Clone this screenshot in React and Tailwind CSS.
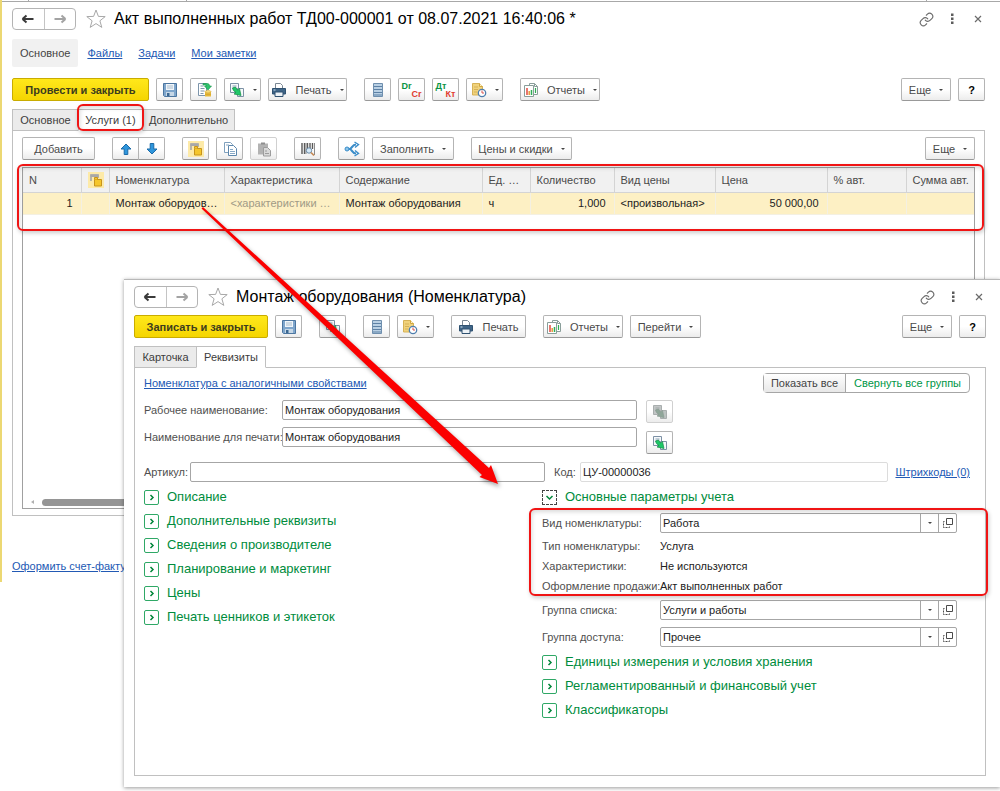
import clsx from 'clsx';
import { Link as ChainIcon } from 'lucide-react';

/* ---------- icons ---------- */

const Svg = ({ children, size = 'size-4', box = '0 0 16 16', className = '' }) => (
  <svg viewBox={box} className={clsx('shrink-0', size, className)} fill="none" aria-hidden="true">{children}</svg>
);

const ArrowIcon = ({ flip, muted }) => (
  <Svg className={flip ? 'rotate-180' : ''}>
    <path d="M2.5 8H13.5M2.5 8L6.5 4.5M2.5 8L6.5 11.5" stroke={muted ? '#a3a3a3' : '#3a3a3a'} strokeWidth="2" />
  </Svg>
);

const StarIcon = () => (
  <Svg size="size-5" box="0 0 20 20">
    <path d="M10 1L12.4 7.4L19.2 7.6L13.9 11.8L15.8 18.4L10 14.6L4.2 18.4L6.1 11.8L.8 7.6L7.6 7.4Z" stroke="#a8a8a8" />
  </Svg>
);

const DotsIcon = () => (
  <Svg>
    <path d="M7 2.5h2.500v2.500H7zM7 6.500h2.500v2.500H7zM7 10.500h2.500v2.500H7z" fill="#5c5c5c" />
  </Svg>
);

const CloseIcon = () => (
  <Svg>
    <path d="M5 5L11 11M11 5L5 11" stroke="#6b6b6b" strokeWidth="1.2" />
  </Svg>
);

const SaveIcon = () => (
  <Svg>
    <path d="M1.5 1.5h13v13h-12l-1-1z" fill="#7fa6cc" stroke="#4c76a0" />
    <path d="M4 2h8v6h-8z" fill="#f1f6fa" />
    <path d="M5 4h6M5 6h6" stroke="#a9bccd" />
    <path d="M4 10h8v4H4z" fill="#c6d7e6" />
    <path d="M5 11h2.500v3H5z" fill="#3b6791" />
  </Svg>
);

const PostIcon = () => (
  <Svg>
    <path d="M2.500 1.500h8v12h-8z" fill="#fff" stroke="#7d95ab" />
    <path d="M4.500 4h3M4.500 6.500h4M4.500 9h4M4.500 11.500h3" stroke="#7d95ab" />
    <path d="M7 1.500h4c2 0 2.500 1 2.500 2.500H15.500L12 8L8.500 4H10.500C10.500 3 9 3 7 3Z" fill="#2cc36b" stroke="#17934a" strokeWidth=".6" />
    <path d="M9 9.500h6v5H9z" fill="#e8bb3a" />
    <ellipse cx="12" cy="9.700" rx="3" ry="1.200" fill="#f7dd7c" stroke="#c9992a" strokeWidth=".5" />
    <path d="M9 12c1.500 1 4.500 1 6 0" stroke="#c9992a" strokeWidth=".6" />
  </Svg>
);

const CopyFromIcon = ({ muted }) => (
  <Svg>
    <path d="M1.500 1.500h8v9h-8z" fill={muted ? '#c2c6c6' : '#f6f9fb'} stroke={muted ? '#a9aeae' : '#7d91a5'} />
    <path d="M3.500 4h4M3.500 6h3" stroke={muted ? '#a0a6a6' : '#8da1b4'} />
    <path d="M8.500 6.500h6v8h-6z" fill={muted ? '#bcc3c1' : '#f6f9fb'} stroke={muted ? '#a9aeae' : '#7d91a5'} />
    <path d="M3.500 6L6.500 5L8.500 8L10.500 6.500L12 13.500L5 12L7 10.500C5 9.500 4 8 3.500 6Z" fill={muted ? '#8fa699' : '#1fc768'} stroke={muted ? '#8a9c92' : '#128d45'} strokeWidth=".7" />
  </Svg>
);

const PrinterIcon = () => (
  <Svg>
    <path d="M4.500 6V1.500h5l2 2V6" fill="#fff" stroke="#7b8894" />
    <path d="M1.500 6.500h13v5.500h-13z" fill="#3f6587" stroke="#2f5170" strokeLinejoin="round" />
    <path d="M4 10h8v4.500H4z" fill="#edf2f6" stroke="#2f5170" />
    <path d="M2.500 8h2" stroke="#cfe0ee" />
  </Svg>
);

const ListIcon = () => (
  <Svg>
    <path d="M3.500 1.500h9v13h-9z" fill="#b9d0e4" stroke="#6f8fae" />
    <path d="M4 4.500h8M4 7.500h8M4 10.500h8M4 13h8" stroke="#5d81a5" />
  </Svg>
);

const NoteClockIcon = () => (
  <Svg>
    <path d="M1.500 1.500h7l3 3v8.500h-10z" fill="#f0d27c" stroke="#d6b257" />
    <path d="M8.500 1.500v3h3" fill="#fff3c9" stroke="#d1a63f" />
    <path d="M3 5h4M3 7.500h4M3 10h3" stroke="#d6b257" />
    <circle cx="11" cy="11" r="3.700" fill="#fff" stroke="#4f7fae" strokeWidth="1.300" />
    <path d="M11 11V8.500M11 11H13" stroke="#d9534f" />
  </Svg>
);

const ReportIcon = () => (
  <Svg>
    <path d="M6.500 1.500h5l3 3v8h-8z" fill="#fff" stroke="#8a9e9a" />
    <path d="M11.500 1.500v3h3" stroke="#8a9e9a" />
    <path d="M1.500 3.500h9v11h-9z" fill="#fff" stroke="#8a9e9a" />
    <path d="M4 6v7" stroke="#e0483e" strokeWidth="1.500" />
    <path d="M6.200 9v4" stroke="#e59a3c" strokeWidth="1.500" />
    <path d="M8.500 8v5" stroke="#2fae54" strokeWidth="1.500" />
    <path d="M12.500 6v5" stroke="#2fae54" strokeWidth="1.200" />
  </Svg>
);

const UpDownIcon = ({ down }) => (
  <Svg className={down ? 'rotate-180' : ''}>
    <path d="M8 3L13 8H9.800V13.500H6.200V8H3Z" fill="#2f96dc" stroke="#1b6aa8" strokeLinejoin="round" />
  </Svg>
);

const PackIcon = () => (
  <Svg>
    <path d="M0 0h16v16H0z" fill="#fdeaa8" />
    <path d="M3 9V3h7v3" stroke="#a6a6a6" strokeWidth="1.600" />
    <path d="M2.500 2.500h8v2.500h-8z" fill="#a8a8a8" />
    <path d="M6.500 7.500h7v6.500h-7z" fill="#f5c62c" stroke="#c8951b" />
    <path d="M6.500 7.500V5.500h3v2" fill="#f5c62c" stroke="#c8951b" />
  </Svg>
);

const CopyIcon = () => (
  <Svg>
    <path d="M2.500 1.500h6l2 2v8h-8z" fill="#fff" stroke="#7fa0bd" />
    <path d="M6.500 4.500h5l3 3v7h-8z" fill="#fff" stroke="#5c86ab" />
    <path d="M8 8.500h3M8 10.500h5M8 12.500h5M4 4h3" stroke="#88a9c6" />
  </Svg>
);

const PasteIcon = () => (
  <Svg>
    <path d="M2 2.500h10v11H2z" fill="#b3b3b3" />
    <path d="M5 1.500h4v2H5z" fill="#8f8f8f" />
    <path d="M7.500 6.500h4l3 3v5.500h-7z" fill="#d9d9d9" stroke="#9c9c9c" />
    <path d="M9 10h2M9 12.500h4" stroke="#9c9c9c" />
  </Svg>
);

const BarcodeIcon = () => (
  <Svg>
    <path d="M2 2v11M4.500 2v11M7.500 2v7M10 2v5M12.500 2v6" stroke="#5a5a5a" strokeWidth="1.400" />
    <path d="M14.500 2v12M6 2v11" stroke="#5a5a5a" strokeWidth=".7" />
    <circle cx="9" cy="9.500" r="2.700" fill="#d7eaf8" stroke="#6b8aa5" />
    <path d="M11 11.500L14 14.500" stroke="#c58a55" strokeWidth="1.700" />
  </Svg>
);

const ShareIcon = () => (
  <Svg>
    <path d="M3 8H5.500C8 8 8 3.500 12 3.500M5.500 8C8 8 8 12.500 12 12.500" stroke="#3b8dc9" strokeWidth="2.200" />
    <path d="M10.500 1L14.500 3.500L11 6.500M10.500 15L14.500 12.500L11 9.500" stroke="#3b8dc9" strokeWidth="1.400" />
    <circle cx="3" cy="8" r="2" fill="#8cc5ea" stroke="#3b8dc9" />
  </Svg>
);

const OpenIcon = () => (
  <Svg size="size-3" box="0 0 12 12">
    <path d="M4.500 1.500h6v6h-6z" stroke="#4a4a4a" />
    <path d="M2.500 4.500h-1v6h6v-1.500" stroke="#4a4a4a" strokeDasharray="2 1" />
  </Svg>
);

const Caret = () => <span className="border-x-2 border-t-2 border-x-transparent border-t-[#444]" />;

/* two-letter accounting marks, one above the other */
const PairMark = ({ first, second }) => (
  <span className="block w-5 text-[9px] leading-2 font-bold">
    <span className="block text-left text-[#0b9444]">{first}</span>
    <span className="block text-right text-[#e03c31]">{second}</span>
  </span>
);

/* ---------- controls ---------- */

const Button = ({ children, className, label, caret, muted }) => (
  <button
    type="button"
    aria-label={label}
    className={clsx(
      'flex h-[23px] shrink-0 items-center justify-center gap-2 rounded-xs border bg-linear-to-b from-white from-50% to-[#ececec] text-[#4a4a4a]',
      muted ? 'border-[#d0d0d0]' : 'border-[#b4b4b4] border-b-[#999]',
      className,
    )}
  >
    {children}
    {caret && <Caret />}
  </button>
);

const MainButton = ({ children, className }) => (
  <button type="button" className={clsx('h-[23px] shrink-0 rounded-xs border border-[#c9ac00] bg-linear-to-b from-[#ffe81a] to-[#f5d500] font-bold text-[#3c3c1e]', className)}>
    {children}
  </button>
);

const Divider = () => <span className="w-[3px] shrink-0" />;

const WindowTitle = ({ children }) => (
  <header className="flex h-[22px] items-center">
    <div className="flex h-[22px] w-16 shrink-0 divide-x divide-[#c4c4c4] rounded-sm border border-[#b4b4b4]">
      <button type="button" aria-label="Назад" className="flex flex-1 items-center justify-center"><ArrowIcon /></button>
      <button type="button" aria-label="Вперед" className="flex flex-1 items-center justify-center"><ArrowIcon flip muted /></button>
    </div>
    <button type="button" aria-label="В избранное" className="ml-[10px]"><StarIcon /></button>
    <h1 className="ml-2 flex-1 truncate text-base leading-5 text-black">{children}</h1>
    <div className="-mr-px flex items-center gap-[10px]">
      <button type="button" aria-label="Ссылка"><ChainIcon size={15} strokeWidth={1.8} color="#6b6b6b" /></button>
      <button type="button" aria-label="Меню"><DotsIcon /></button>
      <button type="button" aria-label="Закрыть"><CloseIcon /></button>
    </div>
  </header>
);

const Tab = ({ children, active, className }) => (
  <button
    type="button"
    role="tab"
    aria-selected={!!active}
    className={clsx('relative h-[22px] border border-[#c0c0c0] text-[#3c3c3c]', active ? 'z-10 border-b-white bg-white' : 'bg-[#ebebeb]', className)}
  >
    {children}
  </button>
);

/* red frame round the part being explained */
const Mark = ({ className }) => (
  <span className={clsx('pointer-events-none absolute z-20 rounded-md border-2 border-[#f01414] shadow-[1px_2px_4px_rgba(0,0,0,0.2),inset_1px_2px_4px_rgba(0,0,0,0.15)]', className)} />
);

const Link = ({ children, className }) => <a href="#" className={clsx('text-[#2259b4] underline', className)}>{children}</a>;

const Group = ({ children, open }) => (
  <button type="button" aria-expanded={!!open} className="flex h-6 items-center gap-2 text-[13px] whitespace-nowrap text-[#008c3c]">
    <span className={clsx('flex size-[15px] items-center justify-center border', open ? 'border-dashed border-[#444]' : 'rounded-xs border-[#2fa866]')}>
      <Svg size="size-[11px]" box="0 0 11 11">
        <path d={open ? 'M2.500 4L5.500 7L8.500 4' : 'M4.500 3L7 5.500L4.500 8'} stroke="#00863a" strokeWidth="1.500" />
      </Svg>
    </span>
    {children}
  </button>
);

const inputClass = 'h-5 min-w-0 rounded-xs border px-[2px] text-[#222] outline-none';
const labelClass = 'shrink-0 whitespace-nowrap text-[#4f4f4f]';

const Choice = ({ id, label, value }) => (
  <div className="flex h-[27px] items-center">
    <label htmlFor={id} className={clsx(labelClass, 'w-[118px]')}>{label}</label>
    <div className="flex h-5 w-[297px] rounded-xs border border-[#a6a6a6]">
      <div className="relative flex-1">
        <select id={id} className="h-full w-full appearance-none pl-[2px] text-[#222] outline-none">
          <option>{value}</option>
        </select>
        <span className="pointer-events-none absolute inset-y-0 right-0 flex w-[18px] items-center justify-center border-l border-[#a6a6a6]"><Caret /></span>
      </div>
      <button type="button" aria-label="Открыть" className="flex w-[18px] items-center justify-center border-l border-[#a6a6a6]"><OpenIcon /></button>
    </div>
  </div>
);

const Fact = ({ label, value }) => (
  <div className="flex h-5 items-center">
    <dt className={clsx(labelClass, 'w-[118px]')}>{label}</dt>
    <dd className="text-[#222]">{value}</dd>
  </div>
);

/* ---------- services table ---------- */

const columns = [
  { title: 'N', value: '1', width: 'w-[58px]', right: true },
  { title: <PackIcon />, value: '', width: 'w-[28px]' },
  { title: 'Номенклатура', value: 'Монтаж оборудов…', width: 'w-[115px]' },
  { title: 'Характеристика', value: '<характеристики …', width: 'w-[115px]', dim: true },
  { title: 'Содержание', value: 'Монтаж оборудования', width: 'w-[143px]' },
  { title: 'Ед. …', value: 'ч', width: 'w-[48px]' },
  { title: 'Количество', value: '1,000', width: 'w-[84px]', right: true },
  { title: 'Вид цены', value: '<произвольная>', width: 'w-[101px]' },
  { title: 'Цена', value: '50 000,00', width: 'w-[112px]', right: true },
  { title: '% авт.', value: '', width: 'w-[79px]' },
  { title: 'Сумма авт.', value: '', width: 'w-auto' },
];

const ServicesTable = () => (
  <div className="relative mt-[7px] flex h-[342px] flex-col border border-[#a0a0a0]">
    <table className="w-full table-fixed border-collapse text-left">
      <thead>
        <tr className="h-6 bg-[#f1f1f1] text-[#4a4a4a]">
          {columns.map((c, i) => (
            <th key={i} className={clsx('border-r border-b border-[#d4d4d4] py-0 pl-[6px] font-normal whitespace-nowrap last:border-r-0', c.width)}>{c.title}</th>
          ))}
        </tr>
      </thead>
      <tbody>
        <tr className="h-[22px] bg-[#fdf0c4]">
          {columns.map((c, i) => (
            <td key={i} className={clsx('border-r border-b border-[#f4f0e2] py-0 pl-[6px] whitespace-nowrap last:border-r-0', c.right && 'pr-2 text-right', c.dim ? 'text-[#a09a86]' : 'text-[#222]')}>{c.value}</td>
          ))}
        </tr>
      </tbody>
    </table>
    <div className="mt-auto flex h-3 items-center gap-2 pl-2">
      <span className="border-y-2 border-r-3 border-y-transparent border-r-[#b0b0b0]" />
      <span className="h-[7px] w-3/4 rounded-full bg-[#959595]" />
    </div>
    <Mark className="-top-[4px] -right-[10px] -left-[6px] h-[67px]" />
  </div>
);

/* ---------- windows ---------- */

const ActWindow = () => (
  <main className="h-[582px] border-l-2 border-[#ecd873] pr-[15px] pl-[10px]">
    <div className="-mr-[15px] -ml-[10px] flex h-px divide-x divide-[#a8a8a8]">
      <span className="w-[27px]" />
      <span className="w-[158px]" />
      <span className="flex-1" />
      <span className="w-[73px]" />
    </div>
    <div className="-mr-[15px] -ml-[10px] h-[7px] border-t border-[#a8a8a8]" />
    <WindowTitle>Акт выполненных работ ТД00-000001 от 08.07.2021 16:40:06 *</WindowTitle>
    <nav className="mt-[9px] flex h-7 items-center">
      <span className="flex h-7 items-center rounded-xs bg-[#f1f1f1] px-2 text-[#444]">Основное</span>
      <Link className="ml-[9px]">Файлы</Link>
      <Link className="ml-4">Задачи</Link>
      <Link className="ml-4">Мои заметки</Link>
    </nav>
    <div className="mt-[11px] flex gap-[7px]">
      <MainButton className="w-[137px]">Провести и закрыть</MainButton>
      <Button className="w-[27px]" label="Записать"><SaveIcon /></Button>
      <Button className="w-[27px]" label="Провести"><PostIcon /></Button>
      <Button className="w-[37px]" label="Создать на основании" caret><CopyFromIcon /></Button>
      <Button className="w-[79px]" caret><PrinterIcon />Печать</Button>
      <Divider />
      <Button className="w-[27px]" label="Список"><ListIcon /></Button>
      <Button className="w-[27px]" label="Проводки МСФО"><PairMark first="Dr" second="Cr" /></Button>
      <Button className="w-[27px]" label="Проводки"><PairMark first="Дт" second="Кт" /></Button>
      <Button className="w-[37px]" label="Напоминания" caret><NoteClockIcon /></Button>
      <Divider />
      <Button className="w-20" caret><ReportIcon />Отчеты</Button>
      <Button className="ml-auto w-[50px]" caret>Еще</Button>
      <Button className="w-[27px] font-bold text-black">?</Button>
    </div>

    <div role="tablist" className="mt-2 flex">
      <Tab className="w-[67px]">Основное</Tab>
      <div className="relative -ml-px flex">
        <Tab active className="w-[65px]">Услуги (1)</Tab>
        <Mark className="-top-[5px] -right-px -left-px h-[27px]" />
      </div>
      <Tab className="-ml-px w-[93px]">Дополнительно</Tab>
    </div>
    <section className="-mt-px h-[386px] border border-[#c0c0c0] px-[9px] pt-[6px]">
      <div className="flex gap-[7px]">
        <Button className="w-[73px]">Добавить</Button>
        <Divider />
        <div className="flex">
          <Button className="w-[27px] rounded-r-none" label="Выше"><UpDownIcon /></Button>
          <Button className="-ml-px w-[27px] rounded-l-none" label="Ниже"><UpDownIcon down /></Button>
        </div>
        <Divider />
        <Button className="w-[27px]" label="Набор"><PackIcon /></Button>
        <Button className="w-[27px]" label="Копировать"><CopyIcon /></Button>
        <Button className="w-[27px]" label="Вставить" muted><PasteIcon /></Button>
        <Divider />
        <Button className="w-[27px]" label="Штрихкод"><BarcodeIcon /></Button>
        <Divider />
        <Button className="w-[27px]" label="Разбить строку"><ShareIcon /></Button>
        <Button className="w-[82px]" caret>Заполнить</Button>
        <Divider />
        <Button className="w-[101px]" caret>Цены и скидки</Button>
        <Button className="ml-auto w-[50px]" caret>Еще</Button>
      </div>
      <ServicesTable />
    </section>
    <Link className="mt-[42px] inline-block">Оформить счет-фактуру</Link>
  </main>
);

const sections = ['Описание', 'Дополнительные реквизиты', 'Сведения о производителе', 'Планирование и маркетинг', 'Цены', 'Печать ценников и этикеток'];

const ItemWindow = () => (
  <div role="dialog" aria-label="Номенклатура" className="absolute top-[279px] right-0 left-[124px] z-30 border-t border-[#b8b8b8] bg-white pt-[6px] pr-[14px] pb-[11px] pl-[10px] shadow-[0_1px_4px_rgba(0,0,0,0.4)]">
    <WindowTitle>Монтаж оборудования (Номенклатура)</WindowTitle>
    <div className="mt-[7px] flex gap-[7px]">
      <MainButton className="w-[134px]">Записать и закрыть</MainButton>
      <Button className="w-[27px]" label="Записать"><SaveIcon /></Button>
      <Divider />
      <Button className="w-[27px]" label="Создать на основании"><CopyFromIcon /></Button>
      <Divider />
      <Button className="w-[27px]" label="Список"><ListIcon /></Button>
      <Button className="w-[37px]" label="Напоминания" caret><NoteClockIcon /></Button>
      <Divider />
      <Button className="w-[75px]"><PrinterIcon />Печать</Button>
      <Divider />
      <Button className="w-20" caret><ReportIcon />Отчеты</Button>
      <Button className="w-[71px]" caret>Перейти</Button>
      <Button className="ml-auto w-[50px]" caret>Еще</Button>
      <Button className="w-[27px] font-bold text-black">?</Button>
    </div>

    <div role="tablist" className="mt-2 flex">
      <Tab className="w-[63px]">Карточка</Tab>
      <Tab active className="-ml-px w-[70px]">Реквизиты</Tab>
    </div>
    <section className="-mt-px h-[409px] border border-[#c0c0c0] pt-[5px] pr-[15px] pl-[9px]">
      <div className="flex h-5 items-center justify-between">
        <Link>Номенклатура с аналогичными свойствами</Link>
        <div className="flex h-5 rounded-sm border border-[#a6a6a6]">
          <button type="button" className="w-[82px] border-r border-[#a6a6a6] bg-linear-to-b from-white to-[#e8e8e8] text-[#444]">Показать все</button>
          <button type="button" className="w-[123px] text-[#009646]">Свернуть все группы</button>
        </div>
      </div>
      <div className="mt-[7px] flex gap-[9px]">
        <div className="flex flex-col gap-[7px]">
          <div className="flex h-5 items-center">
            <label htmlFor="work-name" className={clsx(labelClass, 'w-[138px]')}>Рабочее наименование:</label>
            <input id="work-name" defaultValue="Монтаж оборудования" className={clsx(inputClass, 'w-[355px] border-[#a6a6a6]')} />
          </div>
          <div className="flex h-5 items-center">
            <label htmlFor="print-name" className={clsx(labelClass, 'w-[138px]')}>Наименование для печати:</label>
            <input id="print-name" defaultValue="Монтаж оборудования" className={clsx(inputClass, 'w-[355px] border-[#a6a6a6]')} />
          </div>
        </div>
        <div className="flex flex-col gap-2">
          <Button className="w-[27px]" label="Заполнить рабочее наименование" muted><CopyFromIcon muted /></Button>
          <Button className="w-[27px]" label="Заполнить наименование для печати"><CopyFromIcon /></Button>
        </div>
      </div>
      <div className="mt-2 flex h-5 items-center">
        <label htmlFor="sku" className={clsx(labelClass, 'w-[46px]')}>Артикул:</label>
        <input id="sku" className={clsx(inputClass, 'w-[355px] border-[#a6a6a6]')} />
        <label htmlFor="code" className={clsx(labelClass, 'ml-[9px] w-[26px]')}>Код:</label>
        <input id="code" readOnly defaultValue="ЦУ-00000036" className={clsx(inputClass, 'flex-1 border-[#dcdcdc]')} />
        <Link className="ml-[7px]">Штрихкоды (0)</Link>
      </div>
      <div className="mt-[3px] grid grid-cols-[398px_1fr]">
        <div>{sections.map((s) => <Group key={s}>{s}</Group>)}</div>
        <div>
          <Group open>Основные параметры учета</Group>
          <div className="relative">
            <Choice id="kind" label="Вид номенклатуры:" value="Работа" />
            <dl>
              <Fact label="Тип номенклатуры:" value="Услуга" />
              <Fact label="Характеристики:" value="Не используются" />
              <Fact label="Оформление продажи:" value="Акт выполненных работ" />
            </dl>
            <Mark className="-top-px -right-[18px] bottom-0 -left-[13px]" />
          </div>
          <Choice id="list-group" label="Группа списка:" value="Услуги и работы" />
          <Choice id="access-group" label="Группа доступа:" value="Прочее" />
          <Group>Единицы измерения и условия хранения</Group>
          <Group>Регламентированный и финансовый учет</Group>
          <Group>Классификаторы</Group>
        </div>
      </div>
    </section>
  </div>
);

/* pointer from the table row to the item card */
const Pointer = () => (
  <svg viewBox="0 0 320 300" className="pointer-events-none absolute top-[200px] left-[190px] z-40 h-[300px] w-[320px] drop-shadow-[2px_3px_2px_rgba(0,0,0,0.35)]" aria-hidden="true">
    <path d="M11.500 8.500L13 7L299 268L301 265L308 284L289.500 277L292 275Z" fill="#fb0000" />
  </svg>
);

export default function App() {
  return (
    <div className="relative min-h-screen overflow-hidden bg-white font-['Liberation_Sans',Arial,sans-serif] text-[11px] leading-4">
      <ActWindow />
      <ItemWindow />
      <Pointer />
    </div>
  );
}
